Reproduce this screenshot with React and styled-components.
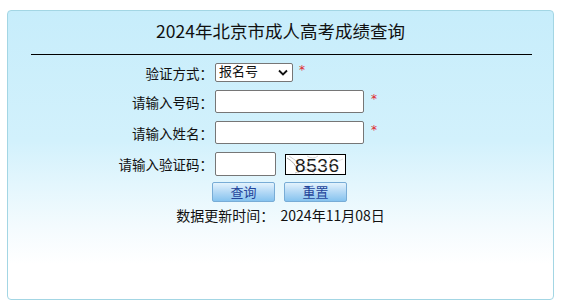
import React from 'react';
import styled, { createGlobalStyle } from 'styled-components';

const GlobalStyle = createGlobalStyle`
  * { box-sizing: border-box; }
  body {
    margin: 0;
    background: #fff;
    font-family: "Noto Sans CJK SC", "Noto Sans", sans-serif;
    color: #111;
  }
`;

const Panel = styled.div`
  margin: 10px 0 0 7px;
  width: 547px;
  height: 290px;
  border: 1px solid #a3d6e4;
  border-radius: 4px;
  background: linear-gradient(#c7edfb 0%, #d2f1fc 45%, #f4fbfe 75%, #ffffff 88%);
`;

const Title = styled.h1`
  margin: 0;
  height: 43px;
  padding-top: 8px;
  font-size: 17.5px;
  font-weight: normal;
  line-height: 24px;
  text-align: center;
  color: #111;
`;

const Rule = styled.div`
  margin: 0 21px 0 23px;
  height: 1px;
  background: #000;
`;

const Form = styled.div`
  padding-top: 8px;
  display: flex;
  flex-direction: column;
`;

const Row = styled.div`
  display: flex;
  align-items: center;
  margin-top: ${(p) => p.$gap || 0}px;
`;

const Label = styled.div`
  width: 205px;
  text-align: right;
  font-size: 13.5px;
  line-height: 16px;
  white-space: nowrap;
`;

const SelectWrap = styled.div`
  position: relative;
  margin-left: 2px;
  width: 78px;
  height: 19px;
`;

const Select = styled.select`
  appearance: none;
  display: block;
  width: 100%;
  height: 100%;
  margin: 0;
  padding: 0 0 3px 3px;
  font-family: inherit;
  font-size: 13px;
  line-height: 14px;
  border: 1px solid #767676;
  border-radius: 2px;
  background: #fff;
  color: #111;
`;

const Chevron = styled.svg`
  position: absolute;
  right: 5px;
  top: 6px;
  pointer-events: none;
`;

const Input = styled.input`
  margin-left: 2px;
  width: ${(p) => p.$w}px;
  height: ${(p) => p.$h || 23}px;
  border: 1px solid #767676;
  border-radius: 2px;
  background: #fff;
  padding: 0 3px;
  font-size: 13px;
`;

const Star = styled.span`
  margin-left: ${(p) => p.$gap || 6}px;
  align-self: flex-start;
  margin-top: ${(p) => p.$top || 0}px;
  color: #e0262e;
  font-family: "DejaVu Sans", sans-serif;
  font-size: 12px;
  line-height: 12px;
`;

const Captcha = styled.svg`
  margin-left: 9px;
  display: block;
`;

const Buttons = styled.div`
  margin-left: 204px;
  display: flex;
  gap: 9px;
`;

const Button = styled.button`
  width: 63px;
  height: 20px;
  padding: 0;
  border: 1px solid #78acd6;
  border-radius: 2px;
  background: linear-gradient(#e4f3fd 0%, #b8dbf6 45%, #86c3ef 100%);
  color: #23449a;
  font-family: inherit;
  font-size: 13px;
  line-height: 18px;
`;

const Updated = styled.div`
  margin-top: 5px;
  text-align: center;
  font-size: 14px;
  line-height: 16px;
  white-space: pre;
`;

const CaptchaImage = () => (
  <Captcha width="61" height="21" viewBox="0 0 61 21">
    <rect x="0.5" y="0.5" width="60" height="20" fill="#fff" stroke="#000" />
    <path d="M2 4 Q10 8 14 19" stroke="#999" fill="none" strokeWidth="0.8" />
    <path d="M4 2 Q16 10 30 20" stroke="#bbb" fill="none" strokeWidth="0.7" />
    <path d="M10 19 Q25 12 40 18" stroke="#aaa" fill="none" strokeWidth="0.7" />
    <path d="M22 2 Q28 6 33 2" stroke="#bbb" fill="none" strokeWidth="0.6" />
    <path d="M44 3 Q50 10 58 5" stroke="#ccc" fill="none" strokeWidth="0.6" />
    <text
      x="10"
      y="17.5"
      fontFamily="Liberation Sans, sans-serif"
      fontSize="19"
      fill="#1a1a1a"
      letterSpacing="0.6"
    >
      8536
    </text>
    <path d="M18 6 Q32 12 48 9" stroke="#fff" fill="none" strokeWidth="0.8" />
    <path d="M24 15 Q38 11 54 16" stroke="#fff" fill="none" strokeWidth="0.6" />
  </Captcha>
);

export default function App() {
  return (
    <>
      <GlobalStyle />
      <Panel>
        <Title>2024年北京市成人高考成绩查询</Title>
        <Rule />
        <Form>
          <Row>
            <Label>验证方式：</Label>
            <SelectWrap>
              <Select defaultValue="bmh">
                <option value="bmh">报名号</option>
                <option value="zkz">准考证号</option>
              </Select>
              <Chevron width="10" height="7" viewBox="0 0 10 7">
                <path d="M1 1.5 L5 5.5 L9 1.5" stroke="#111" strokeWidth="1.8" fill="none" />
              </Chevron>
            </SelectWrap>
            <Star $gap={6} $top={1}>*</Star>
          </Row>
          <Row $gap={8}>
            <Label>请输入号码：</Label>
            <Input $w={149} />
            <Star $gap={7} $top={3}>*</Star>
          </Row>
          <Row $gap={8}>
            <Label>请输入姓名：</Label>
            <Input $w={149} />
            <Star $gap={7} $top={3}>*</Star>
          </Row>
          <Row $gap={8}>
            <Label>请输入验证码：</Label>
            <Input $w={61} $h={24} />
            <CaptchaImage />
          </Row>
          <Row $gap={6}>
            <Buttons>
              <Button>查询</Button>
              <Button>重置</Button>
            </Buttons>
          </Row>
          <Updated>数据更新时间：  2024年11月08日</Updated>
        </Form>
      </Panel>
    </>
  );
}
